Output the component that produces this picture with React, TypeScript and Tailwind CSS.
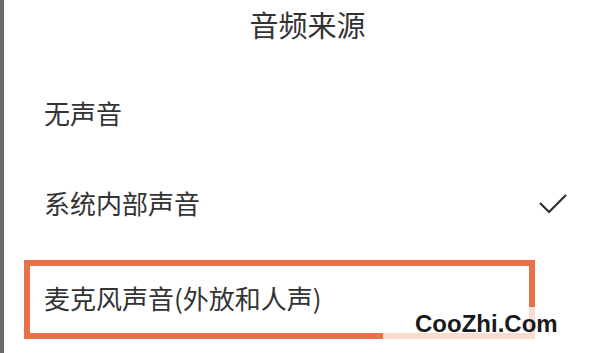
import React from 'react';

const cjk = { fontFamily: '"Noto Sans CJK SC", "Noto Sans", sans-serif' };

function Check() {
  return (
    <svg width="30" height="22" viewBox="0 0 30 22" className="block">
      <path d="M2 9 L11 18 L28 1" fill="none" stroke="#2f2f2f" strokeWidth="2.2" strokeLinejoin="miter" />
    </svg>
  );
}

export default function App() {
  return (
    <div className="relative w-[594px] h-[353px] bg-white flex overflow-hidden" style={cjk}>
      {/* left edge of the screenshot */}
      <div className="w-[4px] h-full bg-[#6b6b6b]" />

      <div className="flex-1 flex flex-col">
        {/* title */}
        <div className="h-[54px] flex items-center justify-center pl-[17px] pb-[5px]">
          <span className="text-[29px] leading-none text-[#333]">音频来源</span>
        </div>

        {/* options */}
        <div className="h-[122px] flex items-center pl-[40px] pb-[4px]">
          <span className="text-[26px] leading-none text-[#333]">无声音</span>
        </div>
        <div className="h-[58px] flex items-center justify-between pl-[40px] pr-[26px]">
          <span className="text-[26px] leading-none text-[#333] mb-[4px]">系统内部声音</span>
          <Check />
        </div>

        <div className="mt-[26px] ml-[20px] w-[511px] h-[79px] border-[6px] border-[#e8714a] flex items-center pl-[14px] pb-[4px]">
          <span className="text-[26px] leading-none text-[#333]">麦克风声音(外放和人声)</span>
        </div>
      </div>

      {/* watermark */}
      <div className="absolute left-[383px] top-[307px] w-[200px] h-[46px] bg-white/75 pl-[32px] pt-[5px]">
        <span className="text-[24px] leading-[24px] font-bold text-[#1a1a1a]" style={{ fontFamily: '"Liberation Sans", Arial, sans-serif' }}>
          CooZhi.Com
        </span>
      </div>
    </div>
  );
}
